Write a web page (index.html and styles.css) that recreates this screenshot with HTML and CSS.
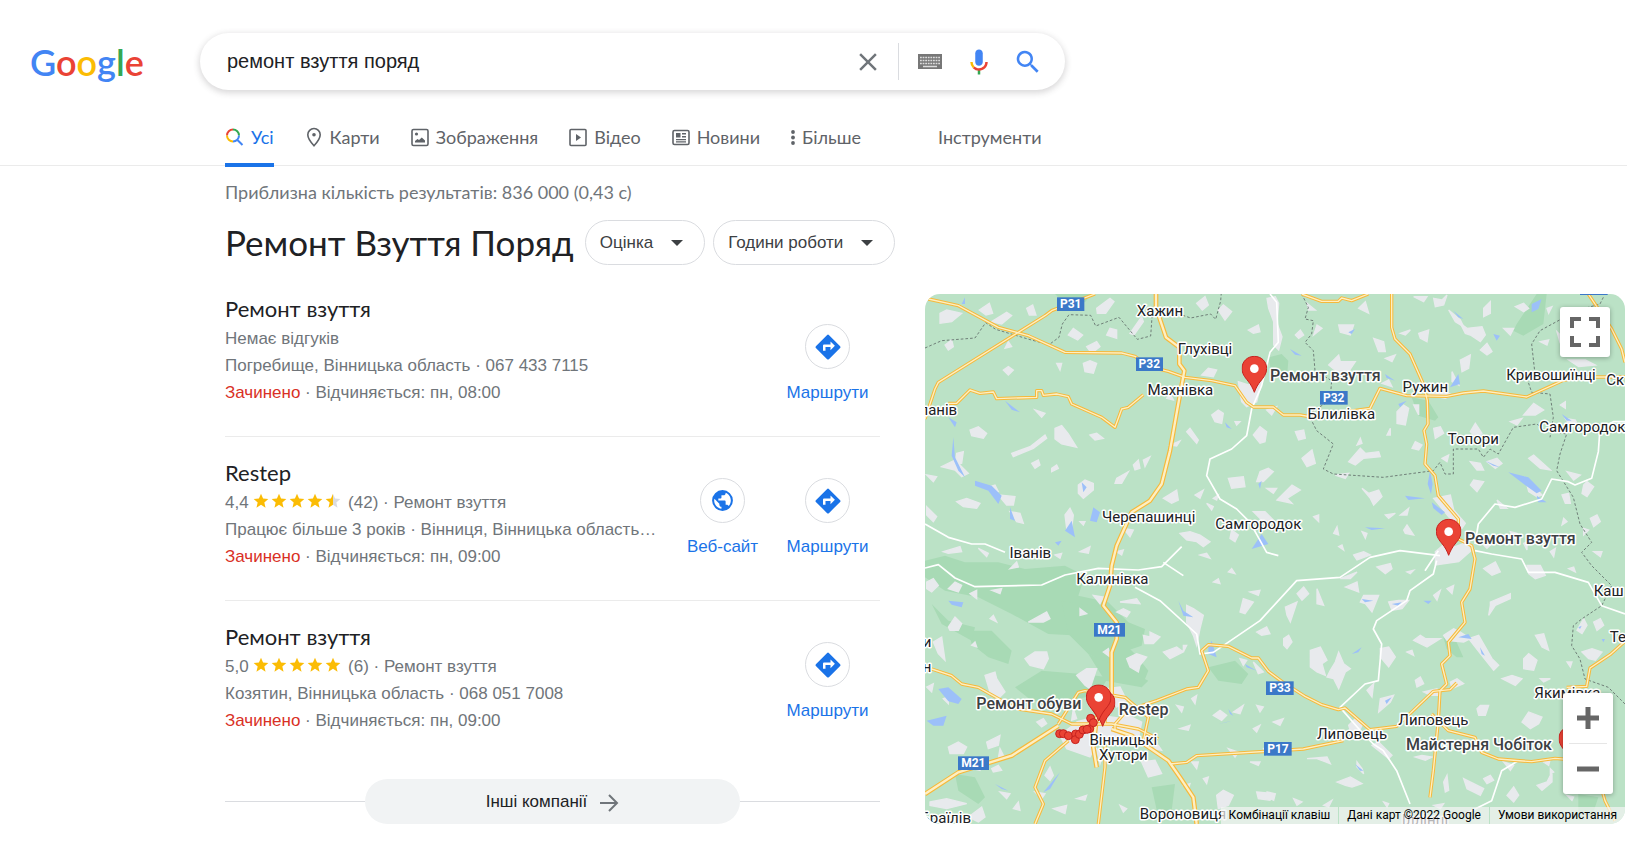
FILE: index.html
```html
<!DOCTYPE html>
<html lang="uk">
<head>
<meta charset="UTF-8">
<meta name="viewport" content="width=device-width, initial-scale=1.0">
<title>ремонт взуття поряд - Пошук Google</title>
<link rel="stylesheet" href="styles.css">
</head>
<body>

<svg class="sprite" aria-hidden="true">
  <symbol id="i-route" viewBox="0 0 24 24"><path d="M21.7 11.3l-9-9a1 1 0 0 0-1.4 0l-9 9a1 1 0 0 0 0 1.4l9 9a1 1 0 0 0 1.4 0l9-9a1 1 0 0 0 0-1.4zM14 14.5V12h-4v3H8v-4c0-.55.45-1 1-1h5V7.5l3.5 3.5z"/></symbol>
  <symbol id="i-star" viewBox="0 0 24 24"><path d="M12 17.8L5.2 22l1.8-7.8L1 9l7.9-.7L12 1l3.1 7.3L23 9l-6 5.2 1.8 7.8z"/></symbol>
  <symbol id="pin" viewBox="0 0 76 112"><path d="M38 2C17 2 1 18 1 38c0 16 8 26 18 38 8 10 14 20 19 34 5-14 11-24 19-34 10-12 18-22 18-38C75 18 59 2 38 2z" fill="#ea4335" stroke="#c5221f" stroke-width="3"/><circle cx="38" cy="39" r="13" fill="#fff"/></symbol>
</svg>

<header>
  <div class="top">
    <a class="logo" href="#"><span class="b">G</span><span class="r">o</span><span class="y">o</span><span class="b">g</span><span class="g">l</span><span class="r">e</span></a>
    <form class="search">
      <input type="text" name="q" value="ремонт взуття поряд" aria-label="Пошук">
      <button class="clear" type="button" aria-label="Очистити"><svg width="30" height="30" viewBox="0 0 24 24" fill="#70757a"><path d="M19 6.4L17.6 5 12 10.6 6.4 5 5 6.4l5.6 5.6L5 17.6 6.4 19l5.6-5.6 5.6 5.6 1.4-1.4-5.6-5.6z"/></svg></button>
      <button type="button" aria-label="Клавіатура"><svg width="24" height="15" viewBox="0 0 24 15"><path d="M0 0h24v15H0z" fill="#777"/><path d="M2 3.5h20M2 6.5h20M2 9.5h20" stroke="#ddd" stroke-width="1.6" stroke-dasharray="1.8 .8"/><path d="M5 12.5h14" stroke="#ddd" stroke-width="1.5"/></svg></button>
      <button type="button" aria-label="Голосовий пошук"><svg width="30" height="30" viewBox="0 0 24 24"><path fill="#4285f4" d="M12 15c1.66 0 3-1.31 3-2.97V4.97C15 3.31 13.66 2 12 2S9 3.31 9 4.97v7.06C9 13.69 10.34 15 12 15z"/><path fill="#34a853" d="M11 18.1h2V22h-2z"/><path fill="#fbbc04" d="M7.1 16.9A6.9 6.9 0 0 1 5 12h2c0 1.4.6 2.6 1.4 3.5z"/><path fill="#ea4335" d="M12 16.9c-1.4 0-2.6-.5-3.5-1.4l-1.4 1.4A6.9 6.9 0 0 0 12 19c3.9 0 7-3.1 7-7h-2c0 2.8-2.2 4.9-5 4.9z"/></svg></button>
      <button type="submit" aria-label="Шукати"><svg width="30" height="30" viewBox="0 0 24 24" fill="#4285f4"><path d="M15.5 14h-.8l-.3-.3A6.5 6.5 0 1 0 13.7 14.4l.3.3v.8l5 5 1.5-1.5zm-6 0a4.5 4.5 0 1 1 0-9 4.5 4.5 0 0 1 0 9z"/></svg></button>
    </form>
  </div>
  <nav class="tabs">
    <a class="active" href="#"><svg width="20" height="20" viewBox="0 0 20 20" fill="none" stroke-width="2"><path d="M2 8.5a6 6 0 0 1 6-6" stroke="#ea4335"/><path d="M8 2.5a6 6 0 0 1 6 6" stroke="#34a853"/><path d="M8 14.5a6 6 0 0 1-6-6" stroke="#fbbc04"/><path d="M14 8.500a6 6 0 0 1-6 6M12.200 12.700l5.300 5.300" stroke="#4285f4"/></svg>Усі</a>
    <a href="#"><svg width="20" height="20" viewBox="0 0 20 20"><path d="M10 1.500a6.200 6.200 0 0 0-6.200 6.200c0 4.300 6.200 11 6.200 11s6.200-6.700 6.200-11A6.200 6.200 0 0 0 10 1.500z" fill="none" stroke="#5f6368" stroke-width="1.600"/><circle cx="10" cy="7.700" r="1.800" fill="#5f6368"/></svg>Карти</a>
    <a href="#"><svg width="20" height="20" viewBox="0 0 20 20"><rect x="2" y="2.500" width="16" height="16" rx="1.500" fill="none" stroke="#5f6368" stroke-width="1.600"/><circle cx="6.500" cy="7" r="1.600" fill="#5f6368"/><path d="M5 15.500v-1.500l2.500-2 1.500 1 2.800-2.500 3.200 3v2z" fill="#5f6368"/></svg>Зображення</a>
    <a href="#"><svg width="20" height="20" viewBox="0 0 20 20"><rect x="2" y="2.500" width="16" height="16" rx="1" fill="none" stroke="#5f6368" stroke-width="1.600"/><path d="M8 7v7l5-3.500z" fill="#5f6368"/></svg>Відео</a>
    <a href="#"><svg width="20" height="20" viewBox="0 0 20 20"><rect x="2" y="3.500" width="16" height="14" rx="1.500" fill="none" stroke="#5f6368" stroke-width="1.600"/><path d="M5 6h4.500v4.500H5zM11 6h4v1.500h-4zM11 9h4v1.500h-4zM5 12h10v1.200H5zM5 14.300h10v1.200H5z" fill="#5f6368"/></svg>Новини</a>
    <a class="more" href="#"><svg width="6" height="20" viewBox="0 0 6 20" fill="#5f6368"><circle cx="3" cy="5" r="1.900"/><circle cx="3" cy="10.500" r="1.900"/><circle cx="3" cy="16" r="1.900"/></svg>Більше</a>
    <a class="tools" href="#">Інструменти</a>
  </nav>
</header>

<main>
  <p class="stats">Приблизна кількість результатів: 836 000 (0,43 с)</p>
  <div class="heading">
    <h1>Ремонт Взуття Поряд</h1>
    <button class="chip" type="button">Оцінка <i class="caret"></i></button>
    <button class="chip" type="button">Години роботи <i class="caret"></i></button>
  </div>

  <div class="columns">
    <section class="results">
      <article class="place first">
        <div class="info">
          <h2>Ремонт взуття</h2>
          <p>Немає відгуків</p>
          <p>Погребище, Вінницька область · 067 433 7115</p>
          <p><span class="closed">Зачинено</span> · Відчиняється: пн, 08:00</p>
        </div>
        <a class="action" href="#"><span class="circle"><svg width="30" height="30"><use href="#i-route"/></svg></span>Маршрути</a>
      </article>

      <article class="place">
        <div class="info">
          <h2>Restep</h2>
          <p>4,4 <span class="stars"><svg><use href="#i-star"/></svg><svg><use href="#i-star"/></svg><svg><use href="#i-star"/></svg><svg><use href="#i-star"/></svg><svg viewBox="0 0 24 24"><path d="M12 17.800L5.200 22l1.800-7.800L1 9l7.900-.7L12 1z"/><path fill="#dadce0" d="M12 17.800V1l3.100 7.300L23 9l-6 5.200 1.800 7.800z"/></svg></span> (42) · Ремонт взуття</p>
          <p>Працює більше 3 років · Вінниця, Вінницька область…</p>
          <p><span class="closed">Зачинено</span> · Відчиняється: пн, 09:00</p>
        </div>
        <a class="action" href="#"><span class="circle"><svg width="25" height="25" viewBox="0 0 24 24"><path d="M12 2a10 10 0 1 0 0 20 10 10 0 0 0 0-20zm-1 17.930c-3.950-.490-7-3.850-7-7.930 0-.620.080-1.210.210-1.790L9 15v1c0 1.100.9 2 2 2v1.930zm6.900-2.540c-.260-.810-1-1.390-1.900-1.390h-1v-3c0-.550-.450-1-1-1H8v-2h2c.55 0 1-.45 1-1V7h2c1.100 0 2-.9 2-2v-.410c2.930 1.190 5 4.060 5 7.410 0 2.080-.8 3.970-2.100 5.390z"/></svg></span>Веб-сайт</a>
        <a class="action" href="#"><span class="circle"><svg width="30" height="30"><use href="#i-route"/></svg></span>Маршрути</a>
      </article>

      <article class="place">
        <div class="info">
          <h2>Ремонт взуття</h2>
          <p>5,0 <span class="stars"><svg><use href="#i-star"/></svg><svg><use href="#i-star"/></svg><svg><use href="#i-star"/></svg><svg><use href="#i-star"/></svg><svg><use href="#i-star"/></svg></span> (6) · Ремонт взуття</p>
          <p>Козятин, Вінницька область · 068 051 7008</p>
          <p><span class="closed">Зачинено</span> · Відчиняється: пн, 09:00</p>
        </div>
        <a class="action" href="#"><span class="circle"><svg width="30" height="30"><use href="#i-route"/></svg></span>Маршрути</a>
      </article>

      <div class="others">
        <a href="#">Інші компанії <svg width="20" height="20" viewBox="0 0 20 20" fill="none" stroke="#70757a" stroke-width="2"><path d="M1 11h16M10 3l8 8-8 8"/></svg></a>
      </div>
    </section>

    <section class="map">
      <svg class="canvas" viewBox="0 0 2100 1590" preserveAspectRatio="xMidYMid slice">
        <!-- forests -->
        <g class="forest">
          <path d="M0 800l60-15 60 20 100 0 80 20 120-10 60 30-20 60 90 20 60 60 50 20-10 50-90 30-90-60-100-5-110-60-100-50-100-20-60-40z"/>
          <path d="M410 920l120 20 40 80 60 60 40 50-20 50-80-60-80-40-60-60z"/>
          <path d="M130 1010l70 0 60 60-10 40-60-20-50-40zM270 1180l80-50 120 10 80 10-30 50-120 30-80-10z"/>
          <path d="M20 930l50 50 80 20-10 40-90-50zM490 1080l120 50 60 30-20 20-110-20z"/>
          <path d="M850 1120l80-20 40 40-20 30-70-10zM90 1440l60 10 30 60-20 20-60-40zM680 1480l70-10-10 80-40 20z"/>
          <path d="M1030 190l40-10 20 20-5 60-45-20zM1775 90l60-90 30 0-10 90-60 35-30-15zM1460 310l50 10 30 50-10 10-50-15zM1555 1030l40 15 20 45-20 0-30-25zM1960 1500l60 10-20 60-40-20z"/>
          <path d="M390 0h110l-20 25-70-5z"/>
        </g>

        <!-- fields and villages -->
        <g class="land">
          <g transform="translate(-15 -27)">
            <path d="M60 85l20-10 45 10-30 25-35 5zM178 75l30-20 10 30-20 5zM215 110l45-28 15 10-30 25zM320 70l18-10 10 30-20 0zM445 150l15-20 28 20-15 15zM530 70l40-30 12 10-25 35-25 0zM630 145l35-50 5 15-28 40zM830 55l25-20 10 25-18 15zM895 75l15-15 25 20-20 25zM985 135l30-15 5 20-20 5z"/>
            <path d="M75 180l20-15 5 20-15 10zM250 255l15-10 15 10-15 15zM490 235l20-8 20 8-10 30-25-5zM410 235l15 0-5 20zM500 185l30-15 10 15-25 20zM560 150l10-20 20 5 0 25zM845 270l20-20 25 5-10 20zM955 290l30 10 40-10-15 60-30 15-15-15z"/>
            <path d="M150 435l25-10 25 20-10 15-35-8zM275 505l55-20 45-35 5 10-40 30-60 25zM335 535l20-10 5 15-15 10zM405 430l20-8 20 25 25 40-45-10-20-15zM510 450l20-5 20 15-25 5zM345 375l30 10-10 12zM395 550l15-10 5 10-20 10zM475 600l20-15 25 10 0 20-30 25-15-15z"/>
            <path d="M110 505l20-5-5 35-20 5zM65 545l40-20 20 20 20 20-20 10-20-20zM20 570l30 5-10 15zM110 650l30-10 40 15-10 15-40-5zM210 605l15-5 10 20-20 5zM235 630l50 5-5 25-20 0zM270 680l30 5 10 30-20-5z"/>
            <path d="M590 580l35-20-20 35-20 0zM640 540l15-15 5 25-15 5zM670 525l20-10-15 30zM730 640l40-25 5 30-20 10zM825 630l25-15-10 25zM860 655l20 10-5 10zM880 640l15-10-5 15zM800 440l10-10 25 35-5 10zM875 390l20-15 15 10-5 30-20-5zM945 410l15 0-10 10zM1000 450l20-25 20 15-5 30-15 5zM1040 375l30-10-15 25z"/>
            <path d="M925 580l45-5 5 30-40 5zM1020 560l25-10 15 10-30 30-20 0zM1000 680l35 0 30 30-20 15zM1040 610l30 0-10 15zM780 745l30-5 30 10 30 20-20 15-20-15-30-5zM935 735l20 15-10 20-15-10zM610 730l30 5-10 20zM435 690l15-20 10 20-5 40-15 0zM480 710l15 0-5 10zM405 810l20-5-5 15zM480 800l30-15-5 20zM590 800l20-5-5 15zM840 810l20-5 10 15z"/>
            <path d="M20 665l30 30-10 15-20-20zM70 800l50-15 5 15-40 5zM175 790l30 15-5 10zM740 340l10-15 10 20zM750 480l30-12-10 15zM255 190l10-20 10 15z"/>
          </g>
          <g transform="translate(1026 -27)">
            <path d="M0 40l25-5 10 20-5 60 15 40-10 40-15-15 0-70-15-40zM120 55l25 20-20 0zM85 150l15-15 10 15-15 10zM140 150l10-30 15 10zM215 120l45 0-10 30-30-8zM275 70l20-20 10 35zM185 240l30-30 5 20 45 0-20 30-35 0zM320 160l30 10 5 30-20 0zM355 220l30-10-10 20zM400 145l30-10-15 15zM455 145l30-10-5 35-20-10zM440 35l40 0-10 15zM500 40l25 5 15-15-10 30-25 5zM545 75l35 30 10 20-25-15z"/>
            <path d="M580 115l20 15 45-5 10 25-15 20-30-20-15-5zM650 70l20-20 0 35-20 10zM640 195l20-20 15 25-15 10zM580 225l30-15-5 40-20 10zM555 260l20 40-20-10zM745 65l25-10 15 15-15 10zM710 130l30 0-10 20zM820 170l25-5-5 15zM870 140l10 10 0 25zM840 70l15-5-10 20zM905 225l50 0 30 15-50 5z"/>
            <path d="M85 440l25-5 5 25-20 5zM105 520l30-25 10 40-25 10zM245 530l35-40 15 15 40-5 5 15-50 5-25 20zM270 480l10-20 5 15zM360 450l10-20 0 20zM390 380l20-20 15 10-10 50-25-5zM440 360l15 0 0 30zM485 330l50-10 20 10-20 10zM345 295l20-10 10 20zM500 430l20-5 10 20-25 15zM525 520l20-10-5 20zM435 490l10-20 20 10-10 15zM610 440l15-25 20 30-15 15zM730 410l35-10-15 20zM770 390l30-35 30 20-25 15z"/>
            <path d="M610 530l30 5 10 20-20 0zM660 530l30-10 15 15-20 15zM785 520l15-10 50 45-30-5zM895 400l30 5 10 20-25 0zM880 360l15-10 0 20zM900 560l40 10-20 15zM690 645l30 25-20 0zM610 600l10-15 30 5-20 30zM775 580l30 30 20 20-15 5-25-15zM885 630l20-5 5 30-15 0zM950 600l10-10 20 15-20 30-15-10zM970 700l20-10 10 20-20 15zM30 645l45-45 25 15-40 25 15 15zM285 610l20 15 30-10 10 20-25 25-10-20zM205 570l40-5-10 15zM140 695l15-5 0 20zM200 745l10-20 5 25z"/>
            <path d="M285 740l15 5-5 15zM355 690l30-5-20 15zM400 690l25-20-5 20zM410 735l10-15 20 30-25-5zM500 640l50-10 10 45 35 40-10 15-40-35zM505 800l30-25 30 10 40-15 15 20-45 40-70 10zM640 770l40 0-20 20zM730 740l20 5 10 15-20 0zM770 775l10-5 0 25zM850 800l15-10-5 25zM215 785l10-5 5 15zM260 810l30-10 20 10-40 15zM980 800l25 0-5 15zM950 730l15 5-15 15zM890 700l10 10-15 10z"/>
          </g>
          <g transform="translate(-15 804)">
            <path d="M20 60l20-10 15 20-20 20-15-10zM85 80l20-20 20 10-10 20zM150 95l20-10 0 25zM85 195l20-30 20 20-10 20-25 0zM210 170l10-10 10 20zM215 85l30-5-5 15zM325 180l55-30 10 20-20 10zM270 20l20-20 5 15zM520 100l30 5-10 20zM590 150l20-10 20 10-10 15zM600 120l50-10 10 15zM550 270l15-10 5 25zM480 140l20 15-20 5z"/>
            <path d="M315 290l30-20 35 0 5 20-15 30-40-10zM195 340l30-10 5 20 25 40-20 20-25-20zM470 340l30-20 30 0-20 60-15-10zM670 220l20 5 0-15 30 15-20 20-25 0zM620 290l30-15 30 10-20 25-5 20-25-15zM730 270l40-15 20 15-40 20zM790 250l10 0-10 20zM800 130l20 10 30 20-10 40-10 50-10-30-20-40zM960 150l10-40 30 10-25 35zM990 90l30-5-5 15zM925 30l10-10 10 15zM880 60l15-10 5 15zM1010 210l30-15 10 20-25 5z"/>
            <path d="M470 480l70-20 70 10 40 60-10 20-110-5-20 40-70-25-20-40zM560 380l40-5 20 40-30 20zM605 450l60 30-10 50-30-10zM665 600l40-5 20 40-40 10zM700 560l15-10 10 15zM690 440l20-10-5 20zM770 430l20 5-5 15zM780 500l30-10-5 15zM880 460l20-15 20 15-15 15zM940 450l30-20-10 25zM1010 430l20 5-10 15zM1000 500l20-10-10 20zM815 410l15-10-5 25zM925 560l30 10-10 15zM1030 560l20-15 10 20-20 15zM990 600l30 0-5 10zM1060 480l30-10-10 20z"/>
            <path d="M20 375l20-10-5 25zM70 410l15-5 0 20zM85 555l30-15 25 15-10 20-40 0zM200 540l40-20-5 30-30 10zM240 560l15 30-20 0zM150 600l35 5-5 20-20-5zM215 620l20-10 10 15-25 5zM240 690l30 5-10 15zM30 720l50-10 60 15-60 15-50-10zM145 765l40-30 10 30-20 15zM375 640l15-25 10 25-10 15zM345 690l30 5-10 15zM400 740l40-10-5 25zM280 740l15-20 5 25zM470 710l30-10-5 15zM530 560l20 15-10 30zM600 730l20 10-10 10zM890 700l20-15 30 15-15 30-30 10zM1010 690l50 5-10 20-35-5zM815 600l20 0-5 20zM790 670l20-5-5 15zM850 650l15-5-5 20z"/>
            <path d="M40 240l25-15 10 70-20-20zM155 250l10-10 5 15zM460 440l10 30-15 5zM350 480l20-10 10 15-15 10zM960 290l20 5-10 15zM1000 300l30 30-15 5z"/>
          </g>
          <g transform="translate(1026 804)">
            <path d="M90 95l20-20 15 20-20 20zM55 135l35-15-5 15-15 45-10-20zM150 80l20 50-20-5zM235 75l35-15 5 30zM220 50l50-20-20 20zM280 120l10-20 45 0-20 50-20-25zM330 15l40-10 5 15-20 15zM365 120l30-5 30 0-20 25-30 5zM420 30l20-5-10 10zM500 100l20-15-10 30zM540 80l20-10-5 25zM650 20l35-20 15 30-25 10zM780 10l40 0 15 30-30 10-20-15zM670 120l60-25 0 15-45 20-20 30 5-30zM905 20l15-5 5 15z"/>
            <path d="M440 235l20-15 15 10 45 0-40 25zM530 220l30-20 20 10 30 20-20 10-50-5zM605 230l30-10 40 70 20 20-15 15-40-50zM805 220l25-5 15 50-20-10zM770 290l15-15 25 20-10 30-30-5zM930 205l20-35 10 20-15 25zM980 180l20-10 10 20-20 15zM945 270l30-10 30 10-20 25-20-5zM900 300l15 0-5 15zM820 350l30 0-20 10zM705 350l30-10 30 10-20 20z"/>
            <path d="M50 230l15-10 10 20-15 20-10-10zM130 265l30-10 20 40-15 10 10 35-25-10-20-15zM205 300l10-30 15 35 20 15-15 10-20 50-15-30-20-5 10-20zM340 260l25-5 20 30-20 30-25-30zM420 270l15-5 5 15zM445 355l15-10 10 20-20 10zM470 390l40-10 10 20-30 0zM550 360l20-10 20 15-35 15zM630 440l10-10 25 0-10 30-20 0zM765 480l20-30 40 15-10 20-25 15zM300 385l20-20-5 40zM340 410l40-10-10 20-35 30z"/>
            <path d="M245 490l20-20 20 20-10 20-25-5zM315 550l20-10 40 40-10 10zM445 585l20-5 30 5-20 10zM530 660l10-20 5 45-10 5zM590 650l60 30-10 20-40-20zM650 650l20-10 10 15-20 10zM720 700l20-25 15 25-15 20zM810 670l30-10 15-30 0 30-30 25zM710 600l30 10-10 15zM830 600l20-10-5 20zM850 620l10 10-10 5zM120 590l60-5 10 20-40-15zM210 660l40-15 35 20-30 10-20-5zM270 600l15 20 5 15-20-20zM0 690l25 5-5 20-20-10zM80 710l25 10-15 10zM170 730l25-15-10 20zM500 730l30-5-10 15zM350 720l15 5-5 10zM900 700l20 5-5 10z"/>
          </g>
        </g>

        <!-- water -->
        <g class="water">
          <path d="M150 560l50 15 30 30-10 25-30-40-40-15zM85 430l5 60 30 60-20-20-20-45zM255 640l15 40-15-5zM440 680l10 50-30-20zM505 640l20 15-10 30-20-5zM470 565l15 15-10 15zM240 320l45 35-25-8zM70 370l25 15-5 15zM110 30l10-20 0 20zM770 250l10 15-10 8zM900 385l20 20-15-5zM1000 570l10-10-5 25zM390 745l20-5-10 15zM1010 720l20 30-50 15z"/>
          <path d="M1095 165l35 20-20-3zM1270 115l20-10-10 15zM1380 240l30 20-25-8zM1420 330l25-10-20 20zM1515 530l8 40-5 30-10-30zM1520 625l40 30-10 8-25-20zM1440 605l60 8-50 5zM1585 50l30 25-15-5zM1600 240l5 30-30 10zM1705 120l20 5-10 15zM1750 535l60 15 40 40-15 8-35-25zM1835 605l30 20-25 0zM1820 30l30-15-10 30-20 10zM1910 360l30 20-15 0zM1320 700l60 3-40 5zM1680 500l45 20-20-5z"/>
          <path d="M70 920l45 5-5 15-30-8zM40 1185l30-5 40 35-10 15-30-8-10-12zM5 1280l60-15-10 30-30 0zM760 920l15 30 30 20-30-5zM850 1060l10-20 15 50-25-10zM355 1495l50-60-30 50zM210 1470l40 20-20-5zM880 1290l40-10-15 5zM910 1245l15 20-10-5zM960 1110l35 20-30-10z"/>
          <path d="M1310 915l35 5-25 5zM1400 930l30-5-10 10zM1495 920l25 0-10 10zM1280 1080l30-20-10 15zM1600 1030l30-10 10 15zM1665 1060l15 25-10-5zM1290 1410l25 20-10 0zM1380 1220l20-10-15 20zM1960 1000l10-5-5 10zM2030 1035l10 0-5 10zM1040 1110l20 8z"/>
        </g>

        <!-- region borders -->
        <g class="border">
          <path d="M0 162l50-22 100-8 32-46 30 20 100 30 60 16 30-22 10-40 20-28 65 2 15 32 70-26 55 66 40-10 5-70 40-10 75 26 60-12 15 16 15-55 5-65 50 5 0-18h80"/>
          <path d="M1130 0l20 40-10 35 25 5-5 40-20 25 25 25 5 60 50 30-5 60-50 30-10 20 20 40 50 40-30 75 30 15 150 10 150-20 20-25 15 35h25v-75h75l15 25 20-25 25 15 45-80 70-10 30 20 60 10-20 60-10 50 50 80 20 80 35 55-30 30 30 40 60 60-30 60-60 40-25 20-5 60 25 40 15 60 70 25 50 50 25 50 20 40"/>
          <path d="M2035 10l-10 20-70 20-110 60-25 40 10 90-20 25 10 30 55 5 10 70-10 60"/>
        </g>

        <!-- white local roads -->
        <g class="local">
          <path d="M1035 0l20 25 5 120-25 30-25 100-30 70-15 80-45 40-65 30-10 50 40 70 50 30 40 40 50 90 35 10"/>
          <path d="M0 690l70 40 70 20 40 0 60 25"/>
          <path d="M0 822l40-10 50 40 60 26 200-5 70-30 100-20 120 5 70-10 60-60"/>
          <path d="M630 880l75 40 110 100 10 60 40-5 140-95 110-120 130-10 90-60 90-20 120 15"/>
          <path d="M715 805l60 40"/>
          <path d="M1535 800l-10 40-70 50-10 30-90 60-10 25 25 45-10 110-40 10-75 70 70 80 30 30 30 20 40 60 40 100"/>
          <path d="M1650 750l10-60 50-60 60 10 80-25 30-60 50 8 20 10 50-20 20-80 5-70 40-20h35"/>
          <path d="M1650 770l50 10 90 15 20 40 80 0 100 30 40 70 70 25"/>
          <path d="M1780 1400l-50 30-30 90-80 40M1500 830l40-60"/>
        </g>

        <!-- main roads -->
        <defs>
          <g id="roads">
            <path d="M10 15l90 20 120 65 90 25 110 50 170 2 40 10 40 30 60 15 50 18 80 10 70 15 35 50 20 14 60 0 30 24 50 0 60 10 80-20 70-10 30-60 80 22 120 2 50-10 60-6 130 18 110-50 60-10 180 0"/>
            <path d="M0 375l30-90 10-20 320-200 20-15 130-50"/>
            <path d="M70 328h25l40-40 30 10 40-4 10 20 120-4 0-20 15 0 5 14 40-4 35 8 10 22 90 40 40 30 20-55 20-5 45-38"/>
            <path d="M1130 0l60 22 50 0 10-10 30 8 50-20M1400 0v100l10 35 45 45 40 90 12 50 2 70-12 20 8 40-5 60 30 35 10 60 60 70 0 60 40 20 10 40-15 90-25 40 10 60-50 60 5 40-25 25 15 60-20 20-5 90-15 150-10 80"/>
            <path d="M1990 0l20 30 50 75 30 60 10 40"/>
            <path d="M20 1125l60 20 30 25 50 10 80 45 40 20 100 15 60 30h120l80 15 60 30"/>
            <path d="M400 1290l60-95 20-5 60 10 60 10 70 60-15 70M540 1290v-60M570 1310v-20l35-40 90-30 90-35 35-5 30-50-20-60 20-18 60 5 70 35 20 0 30 40 40 30 70 45 50 25 50 15 20-5 75 65 80-10 110-105 50-5 20-20M540 1350l0 70-20 170M430 1340l-70 60-30 80 25 50-25 60"/>
            <path d="M735 1410l50-5 30-20 320-20 120-25M1520 1260l50 50 80 20 20 45 50 20 100 8 70-10 60 5M1925 1180l60-3 10-55 60-40 45-40M2020 1450l20 70 30 60"/>
          </g>
          <g id="highway">
            <path d="M693 0l0 40 30 90 40 30 0 50 15 20-20 110-23 130-25 100-35 50-55 35-45 100-15 60-5 60-20 60 40 50 0 50-15 40v150l-45 45-10 90 10 60"/>
            <path d="M0 1500l100-65 160-50 140-90M560 1305l60 20 110 75 35 50 40 60 10 80"/>
          </g>
        </defs>
        <use href="#roads" class="casing"/>
        <use href="#highway" class="casing wide"/>
        <use href="#roads" class="fill"/>
        <use href="#highway" class="fill wide"/>

        <!-- road shields -->
        <g class="shield">
          <rect x="396" y="10" width="82" height="41"/><text x="437" y="42">P31</text>
          <rect x="633" y="190" width="81" height="41"/><text x="673" y="222">P32</text>
          <rect x="1185" y="291" width="83" height="41"/><text x="1226" y="323">P32</text>
          <rect x="507" y="987" width="93" height="41"/><text x="553" y="1020">M21</text>
          <rect x="99" y="1387" width="93" height="41"/><text x="145" y="1420">M21</text>
          <rect x="1023" y="1162" width="83" height="41"/><text x="1065" y="1194">P33</text>
          <rect x="1017" y="1344" width="83" height="41"/><text x="1059" y="1376">P17</text>
          <rect x="1965" y="-38" width="83" height="41"/>
        </g>

        <!-- towns -->
        <g class="town">
          <text x="705" y="66">Хажин</text>
          <text x="840" y="181">Глухівці</text>
          <text x="766" y="302">Махнівка</text>
          <text x="40" y="362">ланів</text>
          <text x="671" y="683">Черепашинці</text>
          <text x="1000" y="705">Самгородок</text>
          <text x="316" y="793">Іванів</text>
          <text x="562" y="871">Калинівка</text>
          <text x="1501" y="294">Ружин</text>
          <text x="1249" y="375">Білилівка</text>
          <text x="1645" y="451">Топори</text>
          <text x="1878" y="257">Кривошиїнці</text>
          <text class="start" x="2044" y="272">Ск</text>
          <text x="1972" y="414">Самгородок</text>
          <text class="start" x="2006" y="907">Каш</text>
          <text class="start" x="2054" y="1043">Те</text>
          <text x="1927" y="1213">Якимівка</text>
          <text x="1525" y="1293">Липовець</text>
          <text x="1281" y="1335">Липовець</text>
          <text x="595" y="1352">Вінницькі</text>
          <text x="595" y="1398">Хутори</text>
          <text x="774" y="1574">Вороновиця</text>
          <text x="62" y="1588">Браїлів</text>
          <text x="6" y="1060">и</text>
          <text x="6" y="1134">н</text>
          <text x="1500" y="1592">Іллінці</text>
        </g>

        <!-- found places -->
        <g class="dots">
          <circle cx="404" cy="1319" r="12"/><circle cx="415" cy="1319" r="12"/><circle cx="430" cy="1325" r="12"/><circle cx="452" cy="1320" r="12"/><circle cx="451" cy="1337" r="12"/><circle cx="463" cy="1321" r="12"/><circle cx="474" cy="1308" r="12"/><circle cx="494" cy="1304" r="12"/><circle cx="486" cy="1306" r="12"/><circle cx="497" cy="1273" r="12"/><circle cx="505" cy="1286" r="12"/>
        </g>
        <use href="#pin" x="950" y="185" width="76" height="112"/>
        <use href="#pin" x="1533" y="674" width="76" height="112"/>
        <use href="#pin" x="495" y="1187" width="76" height="112"/>
        <use href="#pin" x="483" y="1171" width="76" height="112"/>
        <use href="#pin" x="1901" y="1295" width="76" height="112"/>
        <g class="business">
          <text x="1035" y="261">Ремонт взуття</text>
          <text x="1620" y="749">Ремонт взуття</text>
          <text x="154" y="1245">Ремонт обуви</text>
          <text x="581" y="1262">Restep</text>
          <text x="1443" y="1368">Майстерня Чобіток</text>
        </g>
      </svg>

      <button class="fullscreen" type="button" aria-label="На весь екран"><svg width="30" height="30" viewBox="0 0 30 30" fill="none" stroke="#666" stroke-width="4"><path d="M2 11V2h9M19 2h9v9M28 19v9h-9M11 28H2v-9"/></svg></button>
      <div class="zoom">
        <button type="button" aria-label="Збільшити"><svg width="22" height="22" viewBox="0 0 22 22" stroke="#666" stroke-width="5"><path d="M11 0v22M0 11h22"/></svg></button>
        <button type="button" aria-label="Зменшити"><svg width="22" height="22" viewBox="0 0 22 22" stroke="#666" stroke-width="5"><path d="M0 11h22"/></svg></button>
      </div>
      <div class="legal">
        <a href="#">Комбінації клавіш</a>
        <span>Дані карт ©2022 Google</span>
        <a href="#">Умови використання</a>
      </div>
    </section>
  </div>
</main>

</body>
</html>
```
FILE: styles.css
```css
* {
  box-sizing: border-box;
}
body {
  margin: 0;
  background: #fff;
  color: #202124;
  font-family: "Liberation Sans", Arial, sans-serif;
  font-size: 17px;
  overflow-x: hidden;
}
h1, h2, p {
  margin: 0;
  font-weight: 400;
}
a {
  color: inherit;
  text-decoration: none;
}
button {
  padding: 0;
  border: none;
  background: none;
  font: inherit;
  color: inherit;
  cursor: pointer;
}
svg {
  flex-shrink: 0;
}
.sprite {
  display: none;
}

/* header */
header {
  border-bottom: 1px solid #ebebeb;
}
.top {
  display: flex;
  align-items: center;
  padding: 33px 0 20px 30px;
}
.logo {
  width: 170px;
  font-family: Lato, "Open Sans", sans-serif;
  font-size: 36px;
  font-weight: 600;
  line-height: 56px;
}
.logo .b { color: #4285f4; }
.logo .r { color: #ea4335; }
.logo .y { color: #fbbc04; }
.logo .g { color: #34a853; }
.search {
  display: flex;
  align-items: center;
  width: 865px;
  height: 57px;
  padding: 0 13px 0 27px;
  border-radius: 29px;
  box-shadow: 0 2px 6px 1px rgba(64, 60, 67, 0.2);
}
.search input {
  flex: 1;
  min-width: 0;
  padding: 0;
  border: none;
  outline: none;
  background: none;
  color: #202124;
  font-family: inherit;
  font-size: 20px;
}
.search button {
  display: flex;
  align-items: center;
  justify-content: center;
  width: 49px;
  height: 37px;
}
.search .clear {
  width: 61px;
  margin-right: 6px;
  border-right: 1px solid #dadce0;
}
.tabs {
  display: flex;
  gap: 30px;
  height: 56px;
  margin-bottom: -1px;
  padding-left: 225px;
  color: #5f6368;
  font-family: Lato, "Open Sans", sans-serif;
  font-size: 18px;
  line-height: 56px;
}
.tabs a {
  display: flex;
  align-items: center;
  gap: 6px;
  height: 57px;
  border-bottom: 4px solid transparent;
}
.tabs .active {
  color: #1a73e8;
  border-bottom-color: #1a73e8;
}
.tabs .tools {
  margin-left: 47px;
}

/* results */
main {
  padding: 14px 2px 0 225px;
}
.stats {
  color: #70757a;
  font-family: Lato, "Open Sans", sans-serif;
  font-size: 18px;
  line-height: 24px;
}
.heading {
  display: flex;
  align-items: center;
  gap: 8px;
  height: 45px;
  margin-top: 16px;
}
.heading h1 {
  margin-right: 3px;
  font-family: Lato, "Open Sans", sans-serif;
  font-size: 35px;
  line-height: 45px;
}
.chip {
  display: flex;
  align-items: center;
  gap: 18px;
  height: 45px;
  padding: 0 21px 0 14px;
  border: 1px solid #dadce0;
  border-radius: 23px;
  color: #3c4043;
}
.caret {
  border: 6px solid transparent;
  border-top-color: #3c4043;
  border-bottom: none;
}
.columns {
  display: flex;
  align-items: flex-start;
  gap: 45px;
  padding-top: 8px;
}
.results {
  width: 655px;
  flex-shrink: 0;
}
.place {
  display: flex;
  height: 164px;
  padding-top: 24px;
  border-bottom: 1px solid #ebebeb;
}
.place:nth-of-type(3) {
  border-bottom: none;
}
.info {
  flex: 1;
  color: #70757a;
  line-height: 27px;
  white-space: nowrap;
}
.info h2 {
  margin-bottom: 4px;
  color: #202124;
  font-family: Lato, "Open Sans", sans-serif;
  font-size: 22px;
  line-height: 24px;
}
.closed {
  color: #d93025;
}
.stars svg {
  width: 16px;
  height: 16px;
  margin-right: 2px;
  fill: #fbbc04;
  vertical-align: -1px;
}
.action {
  width: 105px;
  padding-top: 17px;
  color: #1a73e8;
  line-height: 24px;
  text-align: center;
}
.first .action {
  padding-top: 27px;
}
.circle {
  display: flex;
  align-items: center;
  justify-content: center;
  width: 45px;
  height: 45px;
  margin: 0 auto 12px;
  border: 1px solid #dadce0;
  border-radius: 50%;
  fill: #1a73e8;
}
.others {
  display: flex;
  align-items: center;
  margin-top: 14px;
}
.others::before,
.others::after {
  content: "";
  flex: 1;
  border-top: 1px solid #dadce0;
}
.others a {
  display: flex;
  align-items: center;
  justify-content: center;
  gap: 12px;
  width: 375px;
  height: 45px;
  border-radius: 23px;
  background: #f1f3f4;
}

/* map */
.map {
  position: relative;
  flex: 1;
  min-width: 0;
  margin-top: 21px;
  border-radius: 15px;
  overflow: hidden;
  background: #bbe2c6;
}
.canvas {
  display: block;
  width: 100%;
  height: 530px;
}
.forest { fill: #a8dab5; }
.land {
  fill: #e8eaed;
  stroke: #e8eaed;
  stroke-width: 4;
}
.water { fill: #9cc0f9; }
.border {
  fill: none;
  stroke: #6f7f78;
  stroke-width: 3;
  stroke-dasharray: 8 6;
}
.local {
  fill: none;
  stroke: #fff;
  stroke-width: 5;
  stroke-linejoin: round;
}
.casing,
.fill {
  fill: none;
  stroke: #f6b93b;
  stroke-width: 10;
  stroke-linejoin: round;
}
.fill {
  stroke: #fdefc3;
  stroke-width: 4;
}
.casing.wide { stroke-width: 14; }
.fill.wide { stroke-width: 7; }
.shield rect {
  fill: #3b78c8;
}
.shield text {
  fill: #fff;
  font: 700 36px Roboto, sans-serif;
  text-anchor: middle;
}
.town text,
.business text {
  fill: #202124;
  stroke: #fff;
  stroke-width: 9;
  stroke-linejoin: round;
  paint-order: stroke;
  font-family: Roboto, sans-serif;
  font-size: 45px;
  text-anchor: middle;
}
.town .start {
  text-anchor: start;
}
.business text {
  fill: #3c4043;
  font-size: 48px;
  font-weight: 500;
  text-anchor: start;
}
.dots circle {
  fill: #ea4335;
  stroke: #c5221f;
  stroke-width: 3;
}
.fullscreen,
.zoom {
  position: absolute;
  right: 15px;
  top: 13px;
  width: 50px;
  height: 50px;
  border-radius: 3px;
  background: #fff;
  box-shadow: 0 1px 5px rgba(0, 0, 0, 0.3);
}
.fullscreen svg {
  display: block;
  margin: auto;
}
.zoom {
  top: auto;
  right: 12px;
  bottom: 30px;
  height: 101px;
  padding: 0 6px;
}
.zoom button {
  display: flex;
  align-items: center;
  justify-content: center;
  width: 100%;
  height: 50px;
}
.zoom button + button {
  height: 51px;
  border-top: 1px solid #e6e6e6;
}
.legal {
  position: absolute;
  right: 0;
  bottom: 0;
  display: flex;
  gap: 1px;
  color: #000;
  font: 12px/17px Roboto, sans-serif;
}
.legal > * {
  padding: 0 8px;
  background: rgba(245, 245, 245, 0.7);
}
```
